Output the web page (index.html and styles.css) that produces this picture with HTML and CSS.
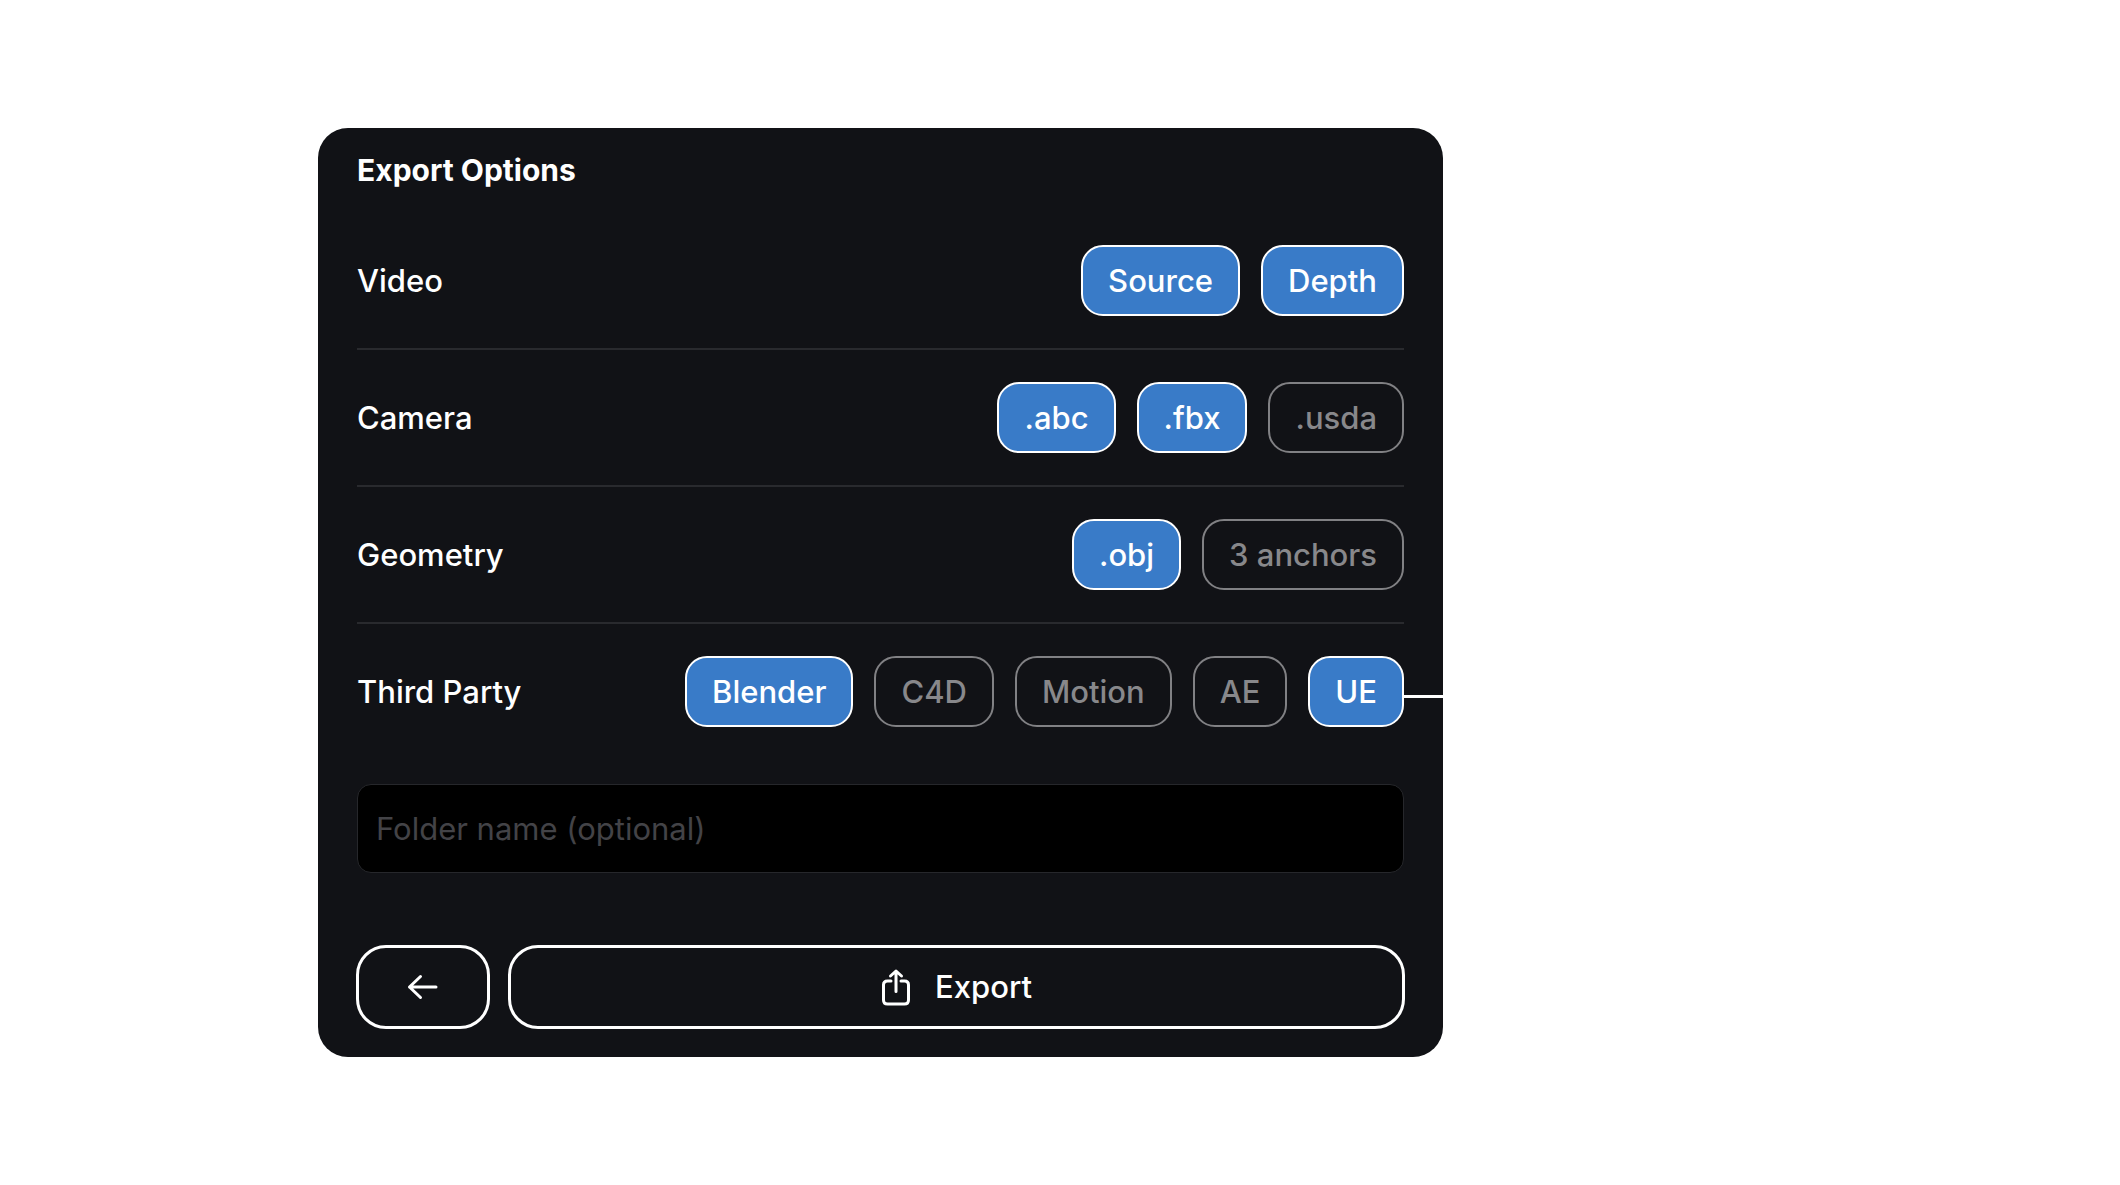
FILE: index.html
```html
<!DOCTYPE html>
<html lang="en">
<head>
    <meta charset="utf-8">
    <title>Export Options</title>
    <link rel="stylesheet" href="styles.css">
</head>
<body>
    <form class="panel">
        <h1>Export Options</h1>

        <div class="rows">
            <div class="row">
                <span id="video">Video</span>
                <div class="options" role="group" aria-labelledby="video">
                    <button type="button" class="pill on" aria-pressed="true">Source</button>
                    <button type="button" class="pill on" aria-pressed="true">Depth</button>
                </div>
            </div>
            <div class="row">
                <span id="camera">Camera</span>
                <div class="options" role="group" aria-labelledby="camera">
                    <button type="button" class="pill on" aria-pressed="true">.abc</button>
                    <button type="button" class="pill on" aria-pressed="true">.fbx</button>
                    <button type="button" class="pill" aria-pressed="false">.usda</button>
                </div>
            </div>
            <div class="row">
                <span id="geometry">Geometry</span>
                <div class="options" role="group" aria-labelledby="geometry">
                    <button type="button" class="pill on" aria-pressed="true">.obj</button>
                    <button type="button" class="pill" aria-pressed="false">3 anchors</button>
                </div>
            </div>
            <div class="row">
                <span id="third-party">Third Party</span>
                <div class="options" role="group" aria-labelledby="third-party">
                    <button type="button" class="pill on" aria-pressed="true">Blender</button>
                    <button type="button" class="pill" aria-pressed="false">C4D</button>
                    <button type="button" class="pill" aria-pressed="false">Motion</button>
                    <button type="button" class="pill" aria-pressed="false">AE</button>
                    <button type="button" class="pill on linked" aria-pressed="true">UE</button>
                </div>
            </div>
        </div>

        <input class="folder" type="text" placeholder="Folder name (optional)" aria-label="Folder name">

        <div class="actions">
            <button type="button" class="action back" aria-label="Back">
                <svg width="32" height="28" viewBox="0 0 32 28">
                    <path d="M29 14H2.500M13.500 3.500L2.500 14L13.500 24.500"/>
                </svg>
            </button>
            <button type="submit" class="action export">
                <svg width="30" height="38" viewBox="0 0 30 38">
                    <path d="M10 13H6.500Q2.500 13 2.500 17V32Q2.500 36 6.500 36H23.500Q27.500 36 27.500 32V17Q27.500 13 23.500 13H20M15 23.500V3M9.500 8L15 3L20.500 8"/>
                </svg>
                Export
            </button>
        </div>
    </form>
</body>
</html>
```
FILE: styles.css
```css
* {
    box-sizing: border-box;
}
body {
    margin: 0;
    padding: 128px 15%;
    background-color: #fff;
    font-family: Inter, sans-serif;
    font-size: 31px;
    font-weight: 500;
    line-height: 36px;
    color: #fff;
}
button, input {
    font: inherit;
}
.panel {
    max-width: 1125px;
    padding: 24px 39px 28px;
    border-radius: 30px;
    background-color: #111216;
}
h1 {
    margin: 0 0 25px;
    font-size: 30px;
    font-weight: 650;
    line-height: 36px;
}
.row {
    display: flex;
    justify-content: space-between;
    align-items: center;
    padding: 32px 0;
    border-bottom: 2px solid #292a2e;
}
.row:last-child {
    border-bottom: none;
}
.options {
    display: flex;
    gap: 21px;
}
.pill {
    position: relative;
    height: 71px;
    padding: 0 25px;
    border: 2px solid #818184;
    border-radius: 22px;
    background-color: transparent;
    color: #88888b;
    cursor: pointer;
}
.pill.on {
    border-color: #fff;
    background-color: #397bc8;
    color: #fff;
}
/* line from the pill to the edge of the panel */
.pill.linked::after {
    content: "";
    position: absolute;
    top: 37px;
    left: 100%;
    width: 41px;
    height: 3px;
    background-color: #fff;
}
.folder {
    display: block;
    width: 100%;
    height: 89px;
    margin-top: 25px;
    padding: 0 18px;
    border: 1px solid #26272b;
    border-radius: 14px;
    background-color: #000;
    color: #fff;
    font-weight: 400;
}
.folder::placeholder {
    color: #434347;
    opacity: 1;
}
.actions {
    display: flex;
    gap: 18px;
    margin: 72px -1px 0;
}
.action {
    display: flex;
    justify-content: center;
    align-items: center;
    height: 84px;
    border: 3px solid #fff;
    border-radius: 30px;
    background-color: transparent;
    color: #fff;
    cursor: pointer;
}
.action svg {
    fill: none;
    stroke: #fff;
    stroke-width: 3;
    stroke-linecap: round;
    stroke-linejoin: round;
}
.back {
    width: 134px;
}
.export {
    flex: 1;
    gap: 24px;
}
```
